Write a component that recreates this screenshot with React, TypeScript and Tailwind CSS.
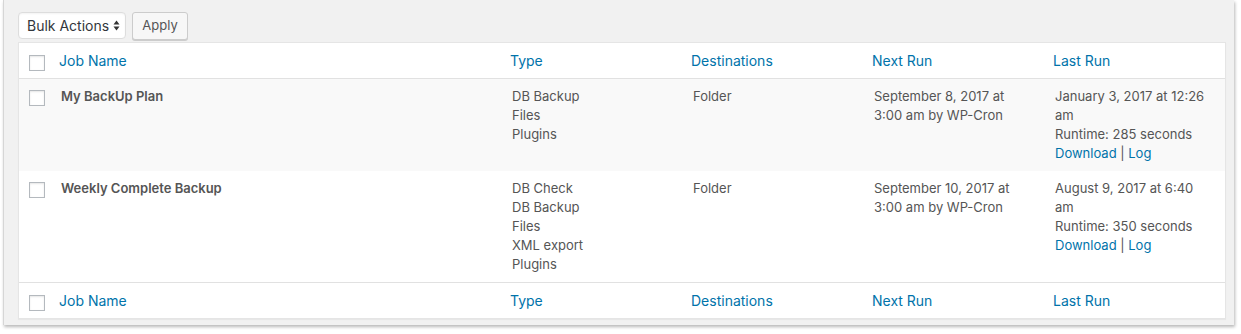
const jobs = [
  {
    name: 'My BackUp Plan',
    types: ['DB Backup', 'Files', 'Plugins'],
    destination: 'Folder',
    nextRun: ['September 8, 2017 at', '3:00 am by WP-Cron'],
    lastRun: ['January 3, 2017 at 12:26', 'am'],
    runtime: 285
  },
  {
    name: 'Weekly Complete Backup',
    types: ['DB Check', 'DB Backup', 'Files', 'XML export', 'Plugins'],
    destination: 'Folder',
    nextRun: ['September 10, 2017 at', '3:00 am by WP-Cron'],
    lastRun: ['August 9, 2017 at 6:40', 'am'],
    runtime: 350
  }
];

const cols = 'grid grid-cols-[31px_451px_181px_181px_181px_181px]';

const Checkbox = () => (
  <span className="block h-4 w-4 border border-[#b4b9be] bg-white shadow-[inset_0_1px_2px_rgba(0,0,0,0.1)]" />
);

const HeaderRow = ({ top }: { top?: boolean }) => (
  <div
    className={`${cols} text-[14px] leading-[19px] text-[#0073aa] ${
      top ? 'border-b border-[#e1e1e1]' : 'border-t border-[#e1e1e1]'
    }`}
  >
    <div className="pl-[10px] pt-[12px]">
      <Checkbox />
    </div>
    <div className="py-[8px] pl-[9px]">Job Name</div>
    <div className="py-[8px] pl-[9px]">Type</div>
    <div className="py-[8px] pl-[9px]">Destinations</div>
    <div className="py-[8px] pl-[9px]">Next Run</div>
    <div className="py-[8px] pl-[9px]">Last Run</div>
  </div>
);

export default function App() {
  return (
    <div className="h-[334px] w-[1241px] bg-white font-['Inter','Liberation_Sans',sans-serif]">
      <div className="ml-[3px] h-[325px] w-[1231px] border-l border-[#d6d6d6] bg-[#f1f1f1] pl-[14px] pt-[12px] shadow-[1px_2px_3px_rgba(0,0,0,0.28)]">
        <div className="flex items-start gap-[6px]">
          <div className="flex h-[27px] w-[108px] items-center justify-between rounded-[4px] border border-[#dddddd] bg-white pl-[8px] pr-[5px] text-[14px] text-[#32373c] shadow-[inset_0_1px_2px_rgba(0,0,0,0.05)]">
            <span>Bulk Actions</span>
            <svg width="7" height="11" viewBox="0 0 7 11" className="fill-[#333]">
              <path d="M3.5 0.5 L6.5 4.5 L0.5 4.5 Z" />
              <path d="M3.5 10.5 L6.5 6.5 L0.5 6.5 Z" />
            </svg>
          </div>
          <button
            type="button"
            className="h-[28px] w-[56px] rounded-[3px] border border-[#cccccc] bg-[#f7f7f7] text-[13px] text-[#555] shadow-[0_1px_0_#cccccc]"
          >
            Apply
          </button>
        </div>
        <div className="mt-[2px] w-[1208px] border border-[#e5e5e5] bg-white shadow-[0_1px_1px_rgba(0,0,0,0.04)]">
          <HeaderRow top />
          {jobs.map((job, idx) => (
            <div
              key={job.name}
              className={`${cols} text-[13px] leading-[19px] text-[#555] ${
                idx % 2 === 0 ? 'bg-[#f9f9f9]' : 'bg-white'
              }`}
            >
              <div className="pl-[10px] pt-[11px]">
                <Checkbox />
              </div>
              <div className="py-[8px] pl-[11px] font-semibold">{job.name}</div>
              <div className="py-[8px] pl-[11px]">
                {job.types.map((t) => (
                  <div key={t}>{t}</div>
                ))}
              </div>
              <div className="py-[8px] pl-[11px]">{job.destination}</div>
              <div className="py-[8px] pl-[11px]">
                {job.nextRun.map((l) => (
                  <div key={l}>{l}</div>
                ))}
              </div>
              <div className="py-[8px] pl-[11px]">
                {job.lastRun.map((l) => (
                  <div key={l}>{l}</div>
                ))}
                <div>Runtime: {job.runtime} seconds</div>
                <div>
                  <span className="text-[#0073aa]">Download</span> |{' '}
                  <span className="text-[#0073aa]">Log</span>
                </div>
              </div>
            </div>
          ))}
          <HeaderRow />
        </div>
      </div>
    </div>
  );
}
